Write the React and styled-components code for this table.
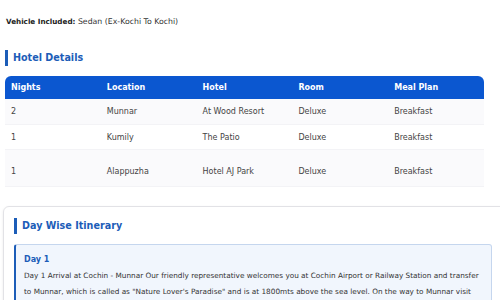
import React from 'react'
import styled, { createGlobalStyle } from 'styled-components'

const Global = createGlobalStyle`
body{
  margin:0;
  font-family:"DejaVu Sans", Verdana, sans-serif;
  background:#fff;
  overflow:hidden;
}
`;

const Page = styled.div`
width:510px;
padding-top:16px;
`;

const Vehicle = styled.p`
margin:0 0 0 6px;
font-size:7.8px;
color:#333;
line-height:12px;
b{color:#222;font-size:7.2px;}
`;

const Heading = styled.h2`
margin:${(props)=>props.inner ? '0' : '0 0 0 5px'};
border-left:3px solid #1c5db8;
padding-left:5px;
font-size:9.6px;
line-height:16px;
color:#1c5db8;
font-weight:700;
`;

const Section = styled.div`
margin-top:${(props)=>props.top};
`;

const Table = styled.div`
margin:10px 0 0 5px;
width:479px;
`;

const Row = styled.div`
display:grid;
grid-template-columns:repeat(5, 1fr);
align-items:center;
height:${(props)=>props.h};
padding-top:${(props)=>props.pt || '0'};
box-sizing:border-box;
background:${(props)=>props.shade ? '#fafafc' : '#fff'};
border-bottom:1px solid #f3f3f6;
`;

const HeadRow = styled(Row)`
background:#0b57d0;
border-radius:6px 6px 0 0;
border-bottom:none;
`;

const Cell = styled.div`
padding-left:6px;
font-size:8px;
color:${(props)=>props.head ? '#fff' : '#444'};
font-weight:${(props)=>props.head ? 700 : 400};
`;

const Card = styled.div`
margin:19px 0 0 3px;
border:1px solid #e2e2e6;
border-radius:6px;
box-shadow:0 1px 3px rgba(0,0,0,0.08);
padding:11px 10px 12px 10px;
`;

const DayBox = styled.div`
margin-top:10px;
width:478px;
box-sizing:border-box;
background:#f1f6fd;
border:1px solid #c5d6ee;
border-left:2px solid #1c5db8;
border-radius:3px;
padding:8px 8px 7px;
`;

const DayTitle = styled.div`
font-size:8px;
font-weight:700;
color:#1c5db8;
line-height:14px;
`;

const DayText = styled.p`
margin:1px 0 0 0;
font-size:7.3px;
line-height:16px;
color:#333;
`;

const hotels = [
  ['2','Munnar','At Wood Resort','Deluxe','Breakfast'],
  ['1','Kumily','The Patio','Deluxe','Breakfast'],
  ['1','Alappuzha','Hotel AJ Park','Deluxe','Breakfast'],
];
const rowSizes = [['26px',true],['25px',false],['37px',true,'7px']];

export default function App() {
  return (
    <Page>
      <Global/>
      <Vehicle><b>Vehicle Included:</b> Sedan (Ex-Kochi To Kochi)</Vehicle>
      <Section top="22px">
        <Heading>Hotel Details</Heading>
        <Table>
          <HeadRow h="23px">
            {['Nights','Location','Hotel','Room','Meal Plan'].map((t)=><Cell head key={t}>{t}</Cell>)}
          </HeadRow>
          {hotels.map((r,i)=>(
            <Row key={i} h={rowSizes[i][0]} shade={rowSizes[i][1]} pt={rowSizes[i][2]}>
              {r.map((c,j)=><Cell key={j}>{c}</Cell>)}
            </Row>
          ))}
        </Table>
      </Section>
      <Card>
        <Heading inner>Day Wise Itinerary</Heading>
        <DayBox>
          <DayTitle>Day 1</DayTitle>
          <DayText>Day 1 Arrival at Cochin - Munnar Our friendly representative welcomes you at Cochin Airport or Railway Station and transfer to Munnar, which is called as "Nature Lover's Paradise" and is at 1800mts above the sea level. On the way to Munnar visit Cheyappara waterfalls and Valara Waterfalls. Visit the plush tea gardens, experience this vast plantation area around the hills.</DayText>
        </DayBox>
      </Card>
    </Page>
  )
}
